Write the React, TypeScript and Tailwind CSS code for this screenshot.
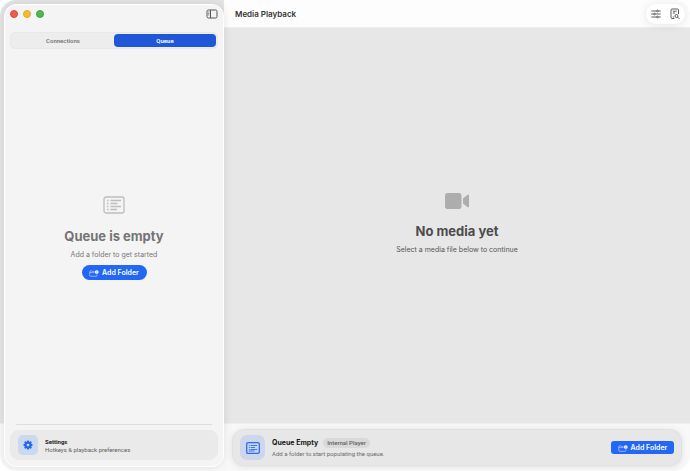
import React from "react";

function FolderPlus({ className }: { className?: string }) {
  return (
    <svg viewBox="0 0 20 14" className={className} fill="none" aria-hidden="true">
      <path
        d="M11 3.2H7.5L6 1.8H3.2Q1.5 1.8 1.5 3.5V10.8Q1.5 12.5 3.2 12.5H14.3Q16 12.5 16 10.8V8.5M1.5 5.2H11"
        stroke="currentColor"
        strokeWidth="1.2"
        opacity="0.8"
      />
      <circle cx="15.5" cy="4" r="3.7" fill="currentColor" />
      <path d="M15.5 2.5V5.5M14 4H17" stroke="#2a6af5" strokeWidth="0.6" />
    </svg>
  );
}

function ListBox({ className }: { className?: string }) {
  return (
    <svg viewBox="0 0 22 18" className={className} fill="none" stroke="currentColor" strokeWidth="1.3" aria-hidden="true">
      <rect x="1" y="1" width="20" height="16" rx="2" />
      <path d="M4 4.5H5.5M4 7.5H5.5M4 10.5H5.5M4 13.5H5.5M7.5 4.5H18M7.5 7.5H14.5M7.5 10.5H18M7.5 13.5H14" />
    </svg>
  );
}

function SmallListBox({ className }: { className?: string }) {
  return (
    <svg viewBox="0 0 14 12" className={className} fill="none" stroke="currentColor" aria-hidden="true">
      <rect x=".7" y=".7" width="12.6" height="10.6" rx="1.3" strokeWidth="1.3" />
      <path d="M2.8 3.5H3.8M2.8 5.5H3.8M2.8 7.5H3.8M4.6 3.5H11.2M4.6 5.5H9M4.6 7.5H11.2M2.8 9H8.5" strokeWidth=".9" />
    </svg>
  );
}

function Gear({ className }: { className?: string }) {
  return (
    <svg viewBox="0 0 20 20" className={className} aria-hidden="true">
      <g fill="currentColor">
        {[0, 45, 90, 135].map((angle) => (
          <rect key={angle} x="8" y="0.8" width="4" height="18.4" rx="1.3" transform={`rotate(${angle} 10 10)`} />
        ))}
        <circle cx="10" cy="10" r="7" />
      </g>
      <circle cx="10" cy="10" r="2.7" fill="#ccd7f0" />
    </svg>
  );
}

function Sidebar() {
  return (
    <aside className="z-10 my-1 ml-1 flex w-[220px] shrink-0 flex-col rounded-xl border border-white bg-[#f4f4f4] px-[5px] pb-[6px] shadow-[0_0_8px_rgba(0,0,0,0.10)]">
      <div className="flex h-[18px] items-center gap-[5px]">
        <button aria-label="Close" className="size-2 rounded-full border border-[#dc4942] bg-[#ed5851]" />
        <button aria-label="Minimize" className="size-2 rounded-full border border-[#e0ad25] bg-[#f1bd32]" />
        <button aria-label="Zoom" className="size-2 rounded-full border border-[#3ca443] bg-[#4eb852]" />
        <button aria-label="Toggle sidebar" className="ml-auto text-[#555]">
          <svg viewBox="0 0 12 10" className="h-[10px] w-3" fill="none" stroke="currentColor" aria-hidden="true">
            <rect x="1" y="1" width="10" height="8" rx="1.5" />
            <path d="M4.5 1V9" />
            <path d="M2 3H3.5M2 4.5H3.5M2 6H3.5" strokeWidth=".6" />
          </svg>
        </button>
      </div>
      <div className="mt-[9px] grid h-[17px] grid-cols-2 rounded-[5px] border border-[#e8e8e8] bg-[#ededed] p-px font-['Roboto','Liberation_Sans',sans-serif] text-[6px] font-semibold">
        <button className="text-[#777]">Connections</button>
        <button className="rounded-[4px] bg-[#2057d8] text-white">Queue</button>
      </div>
      <div className="flex flex-1 flex-col items-center pt-[147px]">
        <ListBox className="h-[18px] w-[22px] text-[#bdbdbd]" />
        <h2 className="mt-[13px] text-[13px] leading-[18px] font-bold text-[#747474]">Queue is empty</h2>
        <p className="mt-[5px] text-[7px] leading-[10px] text-[#777]">Add a folder to get started</p>
        <button className="mt-[5px] flex h-[15px] w-[65px] items-center justify-center gap-[3px] rounded-full bg-[#2367f5] pt-px text-[7px] font-semibold text-white">
          <FolderPlus className="h-[7px] w-[10px]" />
          Add Folder
        </button>
      </div>
      <hr className="mx-[6px] border-[#dedede]" />
      <button className="mt-[5px] flex h-[30px] items-center gap-[7px] rounded-[9px] border border-[#e8e8e8] bg-[#eaeaea] px-[7px] text-left">
        <span className="flex size-5 items-center justify-center rounded-[5px] bg-[#ccd7f0] text-[#2467f3]">
          <Gear className="size-[10px]" />
        </span>
        <span className="flex flex-col pt-px font-['Roboto','Liberation_Sans',sans-serif] text-[6px] leading-[8px]">
          <strong className="font-bold text-[#222]">Settings</strong>
          <span className="text-[#5f5f5f]">Hotkeys &amp; playback preferences</span>
        </span>
      </button>
    </aside>
  );
}

function PlayerBar() {
  return (
    <footer className="px-2 pt-[6px] pb-[5px]">
      <div className="flex h-[37px] items-center rounded-xl border border-[#e1e1e1] bg-[#e7e7e7] px-[7px] shadow-[0_1px_6px_rgba(0,0,0,0.10)]">
        <div className="flex size-[25px] shrink-0 items-center justify-center rounded-[7px] bg-[#ccd6ed] text-[#2c6bf2]">
          <SmallListBox className="h-3 w-[14px]" />
        </div>
        <div className="ml-[7px] flex flex-col gap-px">
          <div className="flex items-center gap-[5px]">
            <h3 className="pt-px text-[7px] leading-[10px] font-bold text-[#161616]">Queue Empty</h3>
            <span className="rounded-full bg-[#d9d9d9] px-1 font-['Roboto','Liberation_Sans',sans-serif] text-[6px] leading-[10px] font-medium text-[#5f5f5f]">Internal Player</span>
          </div>
          <p className="font-['Roboto','Liberation_Sans',sans-serif] text-[6px] leading-[9px] text-[#6b6b6b]">Add a folder to start populating the queue.</p>
        </div>
        <button className="ml-auto flex h-[13px] w-[63px] shrink-0 items-center justify-center gap-[3px] rounded-[3px] bg-[#2367f5] pt-px text-[7px] font-semibold text-white">
          <FolderPlus className="h-[7px] w-[10px]" />
          Add Folder
        </button>
      </div>
    </footer>
  );
}

export default function App() {
  return (
    <div className="h-screen bg-white font-['Inter','Liberation_Sans',sans-serif]">
      <div className="flex h-full overflow-hidden rounded-2xl bg-[linear-gradient(to_bottom,#e4e4e4_calc(100%_-_48px),#f8f8f8_calc(100%_-_47px))]">
        <Sidebar />
        <main className="flex min-w-0 flex-1 flex-col">
          <header className="flex h-[27px] shrink-0 items-center justify-between bg-[#fdfdfd] pr-[5px] pl-[11px]">
            <h1 className="text-[8px] font-semibold text-[#333]">Media Playback</h1>
            <div className="z-10 flex h-5 items-center gap-[9px] rounded-full bg-white px-[5px] text-[#4d4d4d] shadow-[0_1px_10px_rgba(0,0,0,0.10)]">
              <button aria-label="Playback options">
                <svg viewBox="0 0 10 10" className="size-[10px]" fill="none" stroke="currentColor" strokeWidth=".9" aria-hidden="true">
                  <path d="M.3 2H5.5M7.5 2H9.7M.3 5H2.5M4.5 5H9.7M.3 8H5.5M7.5 8H9.7" />
                  <circle cx="6.5" cy="2" r=".9" />
                  <circle cx="3.5" cy="5" r=".9" />
                  <circle cx="6.5" cy="8" r=".9" />
                </svg>
              </button>
              <button aria-label="Inspect media file">
                <svg viewBox="0 0 10 12" className="h-3 w-[10px]" fill="none" stroke="currentColor" strokeWidth=".9" aria-hidden="true">
                  <path d="M4.5 10.5H2Q1 10.5 1 9.5V2Q1 1 2 1H7.5Q8.5 1 8.5 2V6M2.8 3.2H6.7M2.8 5H5M2.8 9H4" />
                  <circle cx="6.5" cy="8" r="1.5" />
                  <path d="M7.7 9.2L9.3 10.8" />
                </svg>
              </button>
            </div>
          </header>
          <section className="flex flex-1 flex-col items-center border-t border-[#ededed] bg-[#e7e7e7] pt-[165px]">
            <svg viewBox="0 0 24 16" className="h-4 w-6 text-[#adadad]" fill="currentColor" aria-hidden="true">
              <rect width="16.5" height="16" rx="2.8" />
              <path d="M18 5.6L22.3 2Q24 .8 24 2.6V13.4Q24 15.2 22.3 14L18 10.4Z" />
            </svg>
            <h2 className="mt-[13px] text-[13px] leading-[18px] font-bold text-[#4c4c4c]">No media yet</h2>
            <p className="mt-[5px] text-[7px] leading-[10px] text-[#555]">Select a media file below to continue</p>
          </section>
          <PlayerBar />
        </main>
      </div>
    </div>
  );
}
